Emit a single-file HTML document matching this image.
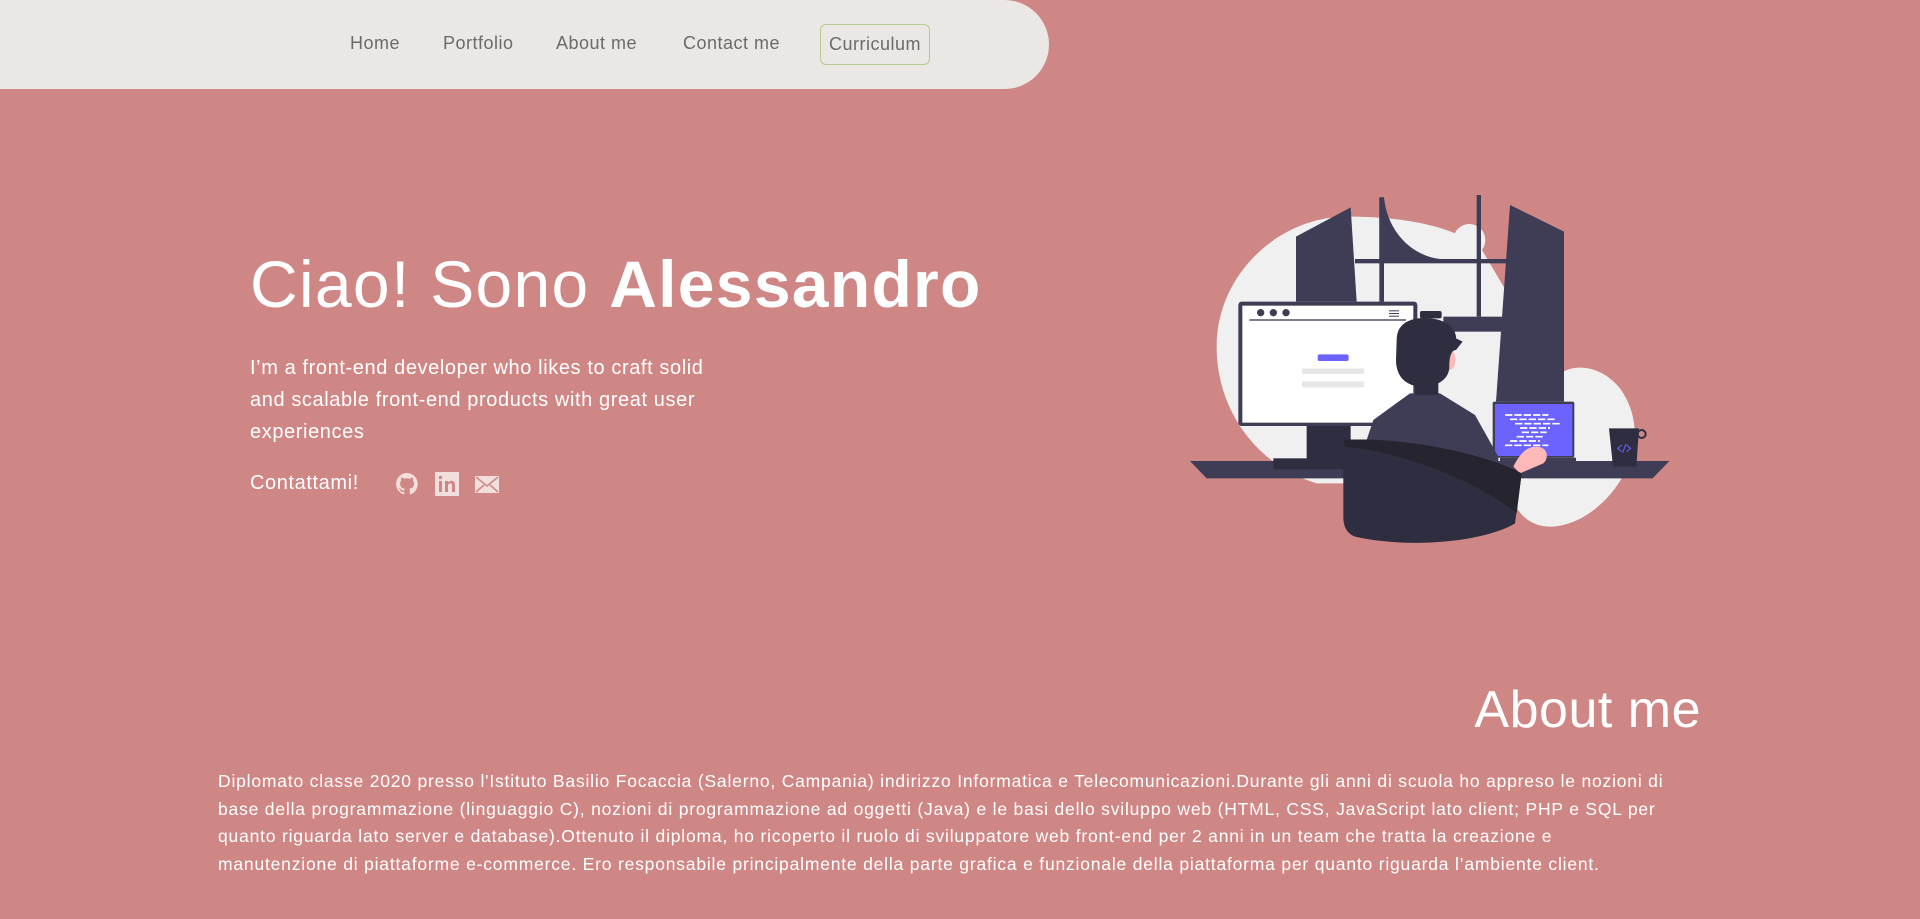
<!DOCTYPE html>
<html><head><meta charset="utf-8"><style>
*{margin:0;padding:0;box-sizing:border-box}
body{width:1920px;height:919px;background:#cf8786;font-family:"Liberation Sans",sans-serif;position:relative;overflow:hidden;color:#fff}
.nav{position:absolute;left:0;top:0;width:1049px;height:89px;background:#ebe7e5;border-radius:0 48px 48px 0}
.nav a{position:absolute;top:33px;font-size:18px;color:#6b6b6b;text-decoration:none;letter-spacing:0.5px}
.cv{border:1px solid #b5cc8e;border-radius:6px;padding:9px 8px;top:24px!important}
h1{position:absolute;left:250px;top:246px;font-size:66px;font-weight:300;white-space:nowrap;letter-spacing:1.3px}
h1 b{font-weight:700}
.p{position:absolute;left:250px;top:352px;font-size:20px;line-height:32px;letter-spacing:0.6px;white-space:nowrap}
.c{position:absolute;left:250px;top:472px;font-size:20px;letter-spacing:0.6px}
.ic{position:absolute;top:472px;width:24px;height:24px}
h2{position:absolute;right:219px;top:680px;font-size:52px;font-weight:400;letter-spacing:0.5px}
.a{position:absolute;left:218px;top:768px;font-size:17.5px;line-height:27.5px;letter-spacing:0.8px;white-space:nowrap}
</style></head><body>
<div class="nav">
<a style="left:350px">Home</a><a style="left:443px">Portfolio</a><a style="left:556px">About me</a><a style="left:683px">Contact me</a><a class="cv" style="left:820px">Curriculum</a>
</div>
<h1>Ciao! Sono <b>Alessandro</b></h1>
<div class="p">I’m a front-end developer who likes to craft solid<br>and scalable front-end products with great user<br>experiences</div>
<div class="c">Contattami!</div>
<svg class="ic" style="left:395px" viewBox="0 0 24 24"><path fill="#f3dede" d="M12 1a11 11 0 0 0-3.5 21.4c.6.1.8-.2.8-.5v-2c-3 .7-3.7-1.3-3.7-1.3-.5-1.3-1.2-1.6-1.2-1.6-1-.7.1-.7.1-.7 1.1.1 1.700 1.1 1.7 1.1 1 1.7 2.6 1.2 3.2.9.1-.7.4-1.2.7-1.5-2.4-.3-5-1.2-5-5.4 0-1.2.4-2.2 1.1-2.9-.1-.3-.5-1.4.1-2.9 0 0 .9-.3 3 1.1a10 10 0 0 1 5.5 0c2.1-1.4 3-1.1 3-1.1.6 1.5.2 2.6.1 2.9.7.8 1.1 1.7 1.1 2.9 0 4.2-2.6 5.1-5 5.4.4.3.8 1 .8 2v3c0 .3.2.6.8.5A11 11 0 0 0 12 1z"/></svg>
<svg class="ic" style="left:435px" viewBox="0 0 24 24"><rect x="0" y="0" width="24" height="24" fill="#f3dede"/><rect x="4" y="9" width="3" height="11" fill="#cf8786"/><circle cx="5.5" cy="5.5" r="1.8" fill="#cf8786"/><path d="M10 9h3v1.5c.7-1.2 2-1.8 3.4-1.8 2.5 0 3.6 1.6 3.6 4.3V20h-3v-6.3c0-1.4-.5-2.3-1.7-2.3s-2.3.9-2.3 2.4V20h-3z" fill="#cf8786"/></svg>
<svg class="ic" style="left:475px" viewBox="0 0 24 24"><rect x="0" y="4" width="24" height="17" fill="#f3dede"/><path d="M1 5l11 9 11-9M1 20l8-7M23 20l-8-7" stroke="#cf8786" stroke-width="1.5" fill="none"/></svg>

<svg style="position:absolute;left:1180px;top:180px" width="500" height="370" viewBox="0 0 1500 1110">
<path fill="#f0f0f0" d="M500 110C300 110 110 280 110 500c0 200 130 360 300 410l580 0 c0 60 40 130 120 130 150 0 330-220 220-400-50-80-150-100-200-50L900 200C800 130 650 110 500 110z"/>
<circle cx="868" cy="180" r="48" fill="#f0f0f0"/>
<g fill="#3f3d56">
<path d="M348 170L512 82L530 365H348z"/>
<path d="M598 52h14c10 100 80 175 168 185H598z"/>
<rect x="598" y="52" width="14" height="313"/>
<rect x="890" y="45" width="13" height="365"/>
<rect x="525" y="237" width="455" height="13"/>
<rect x="790" y="410" width="190" height="45"/>
<path d="M990 75L1152 155V665H948z"/>
<path d="M30 843H1468L1418 895H80z"/>
</g>
<rect x="175" y="365" width="537" height="373" rx="10" fill="#3f3d56"/>
<rect x="187" y="377" width="513" height="351" fill="#fff"/>
<circle cx="242" cy="398" r="11" fill="#3f3d56"/><circle cx="280" cy="398" r="11" fill="#3f3d56"/><circle cx="318" cy="398" r="11" fill="#3f3d56"/>
<rect x="208" y="418" width="470" height="4" fill="#3f3d56"/>
<rect x="627" y="391" width="30" height="3" fill="#3f3d56"/><rect x="627" y="399" width="30" height="3" fill="#3f3d56"/><rect x="627" y="407" width="30" height="3" fill="#3f3d56"/>
<rect x="413" y="523" width="93" height="20" rx="6" fill="#6c63ff"/>
<rect x="366" y="565" width="186" height="17" rx="4" fill="#e6e6e6"/>
<rect x="366" y="604" width="186" height="18" rx="4" fill="#e6e6e6"/>
<rect x="380" y="738" width="132" height="100" fill="#2f2e41"/>
<rect x="280" y="835" width="220" height="33" fill="#2f2e41"/>
<rect x="938" y="665" width="245" height="168" rx="6" fill="#3f3d56"/>
<rect x="945" y="672" width="232" height="156" fill="#6c63ff"/>
<g stroke="#fff" stroke-width="5" stroke-dasharray="22 6">
<line x1="975" y1="705" x2="1105" y2="705"/><line x1="990" y1="718" x2="1125" y2="718"/><line x1="1005" y1="731" x2="1140" y2="731"/><line x1="1020" y1="744" x2="1110" y2="744"/><line x1="1025" y1="757" x2="1100" y2="757"/><line x1="1010" y1="770" x2="1090" y2="770"/><line x1="990" y1="783" x2="1080" y2="783"/><line x1="975" y1="796" x2="1105" y2="796"/></g>
<rect x="960" y="833" width="228" height="25" fill="#3f3d56"/>
<path d="M1287 745h90l-8 115h-70z" fill="#2f2e41"/>
<circle cx="1385" cy="762" r="12" fill="none" stroke="#2f2e41" stroke-width="6"/>
<path d="M1325 795l-12 10 12 10M1340 795l12 10-12 10M1338 792l-10 26" stroke="#6c63ff" stroke-width="3" fill="none"/>
<path d="M580 720L690 640H780L885 705L955 830V900H520z" fill="#3f3d56"/>
<rect x="705" y="600" width="70" height="45" fill="#2f2e41"/>
<ellipse cx="808" cy="540" rx="18" ry="30" fill="#ffb8b8"/>
<path d="M650 480c0-55 50-70 100-65 60 5 80 40 78 60l20 10-20 25c-20 0-20 40-20 50 0 40-40 60-80 60-50 0-80-30-80-80z" fill="#2f2e41"/>
<rect x="720" y="393" width="65" height="22" rx="6" fill="#2f2e41"/>
<path d="M1000 860c20-40 40-60 70-60 30 0 40 30 20 50l-70 30z" fill="#ffb8b8"/>
<path d="M490 780c150-10 400 30 535 100l-20 150c-80 50-300 80-480 40-25-10-35-30-35-60z" fill="#2f2e41"/>
<path d="M495 800c200 20 420 120 515 200l15-120c-135-70-385-110-535-100z" fill="#26252f"/>
</svg>

<h2>About me</h2>
<div class="a">Diplomato classe 2020 presso l'Istituto Basilio Focaccia (Salerno, Campania) indirizzo Informatica e Telecomunicazioni.Durante gli anni di scuola ho appreso le nozioni di<br>base della programmazione (linguaggio C), nozioni di programmazione ad oggetti (Java) e le basi dello sviluppo web (HTML, CSS, JavaScript lato client; PHP e SQL per<br>quanto riguarda lato server e database).Ottenuto il diploma, ho ricoperto il ruolo di sviluppatore web front-end per 2 anni in un team che tratta la creazione e<br>manutenzione di piattaforme e-commerce. Ero responsabile principalmente della parte grafica e funzionale della piattaforma per quanto riguarda l’ambiente client.</div>
</body></html>
